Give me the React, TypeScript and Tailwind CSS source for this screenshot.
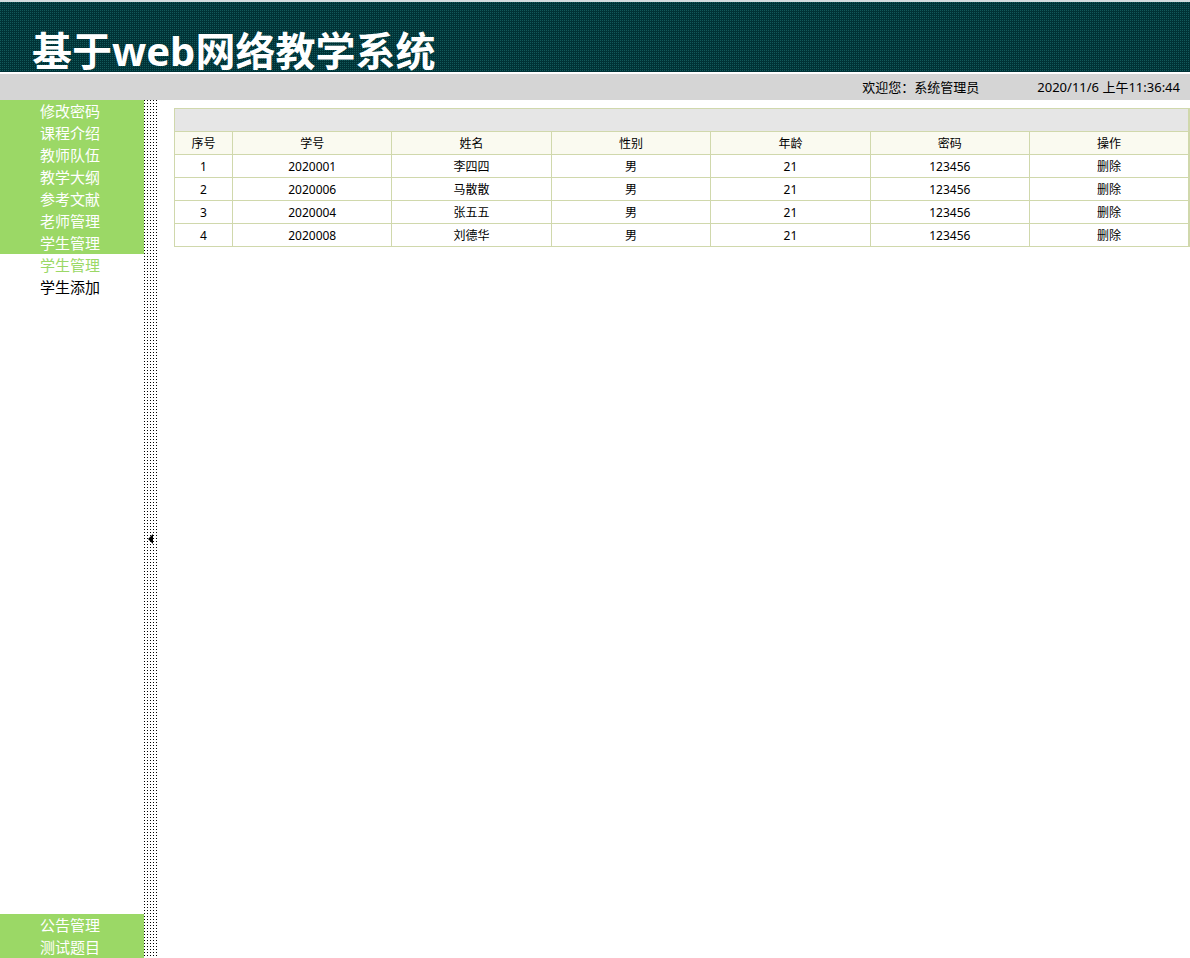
import { useState } from 'react'

const menu = ['修改密码', '课程介绍', '教师队伍', '教学大纲', '参考文献', '老师管理', '学生管理']
const bottomMenu = ['公告管理', '测试题目']

const columns = ['序号', '学号', '姓名', '性别', '年龄', '密码', '操作']

const students = [
  { no: '2020001', name: '李四四', sex: '男', age: 21, password: '123456' },
  { no: '2020006', name: '马散散', sex: '男', age: 21, password: '123456' },
  { no: '2020004', name: '张五五', sex: '男', age: 21, password: '123456' },
  { no: '2020008', name: '刘德华', sex: '男', age: 21, password: '123456' },
]

function MenuItem({ label }: { label: string }) {
  return (
    <li className="bg-[#9bd866] text-white">
      <a href="#" className="block pl-10">{label}</a>
    </li>
  )
}

function Header() {
  return (
    <header>
      <div className="flex h-[74px] items-end border-t-2 border-b-2 border-t-[#d3dcde] border-b-white bg-[linear-gradient(to_right,transparent_1px,#003236_1px),linear-gradient(to_bottom,#12595a_1px,#003236_1px)] bg-[size:2px_2px] pl-8">
        <h1 className="text-[40px] leading-[42px] font-bold text-white">基于web网络教学系统</h1>
      </div>
      <div className="flex h-[26px] items-center justify-end gap-[58px] bg-[#d5d5d5] pt-0.5 pr-2.5 text-[13px]">
        <span>欢迎您：系统管理员</span>
        <time>2020/11/6 上午11:36:44</time>
      </div>
    </header>
  )
}

function Sidebar() {
  return (
    <nav className="flex w-36 shrink-0 flex-col justify-between text-[15px] leading-[22px]">
      <ul>
        {menu.map((label) => <MenuItem key={label} label={label} />)}
        <li>
          <ul>
            <li><a href="#" className="block pl-10 text-[#9bd866]">学生管理</a></li>
            <li><a href="#" className="block pl-10">学生添加</a></li>
          </ul>
        </li>
      </ul>
      <ul>
        {bottomMenu.map((label) => <MenuItem key={label} label={label} />)}
      </ul>
    </nav>
  )
}

function StudentTable() {
  return (
    <table className="w-full table-fixed border-collapse border border-r-2 border-[#d0d8ac] text-center text-xs">
      <colgroup>
        <col className="w-[58px]" />
        {columns.slice(1).map((c) => <col key={c} />)}
      </colgroup>
      <thead>
        <tr className="h-[23px] bg-[#e6e6e6]">
          <td colSpan={7} className="border border-r-2 border-[#d0d8ac]" />
        </tr>
        <tr className="h-[23px] bg-[#fafaf0]">
          {columns.map((c) => (
            <th key={c} className="border border-[#d0d8ac] p-0 pt-0.5 font-normal last:border-r-2">{c}</th>
          ))}
        </tr>
      </thead>
      <tbody>
        {students.map((s, i) => (
          <tr key={s.no} className="h-[23px]">
            <td className="border border-[#d0d8ac] p-0 pt-0.5">{i + 1}</td>
            <td className="border border-[#d0d8ac] p-0 pt-0.5">{s.no}</td>
            <td className="border border-[#d0d8ac] p-0 pt-0.5">{s.name}</td>
            <td className="border border-[#d0d8ac] p-0 pt-0.5">{s.sex}</td>
            <td className="border border-[#d0d8ac] p-0 pt-0.5">{s.age}</td>
            <td className="border border-[#d0d8ac] p-0 pt-0.5">{s.password}</td>
            <td className="border border-r-2 border-[#d0d8ac] p-0 pt-0.5"><a href="#">删除</a></td>
          </tr>
        ))}
      </tbody>
    </table>
  )
}

export default function App() {
  const [open, setOpen] = useState(true)

  return (
    <div className="flex min-h-screen flex-col bg-white font-['Noto_Sans','Noto_Sans_CJK_SC',sans-serif] text-black">
      <Header />
      <div className="flex grow">
        {open && <Sidebar />}
        <button
          type="button"
          aria-label="切换菜单"
          onClick={() => setOpen(!open)}
          className="flex w-[14px] shrink-0 items-center justify-center bg-[linear-gradient(to_right,transparent_1px,white_1px),linear-gradient(to_bottom,black_1px,white_1px)] bg-[size:3px_3px]"
        >
          <svg viewBox="0 0 6 10" className="mt-5 h-[10px] w-[6px]">
            <path d="M5 0v10L0 5z" fill="#000" />
          </svg>
        </button>
        <main className="grow pt-2 pl-4">
          <StudentTable />
        </main>
      </div>
    </div>
  )
}
